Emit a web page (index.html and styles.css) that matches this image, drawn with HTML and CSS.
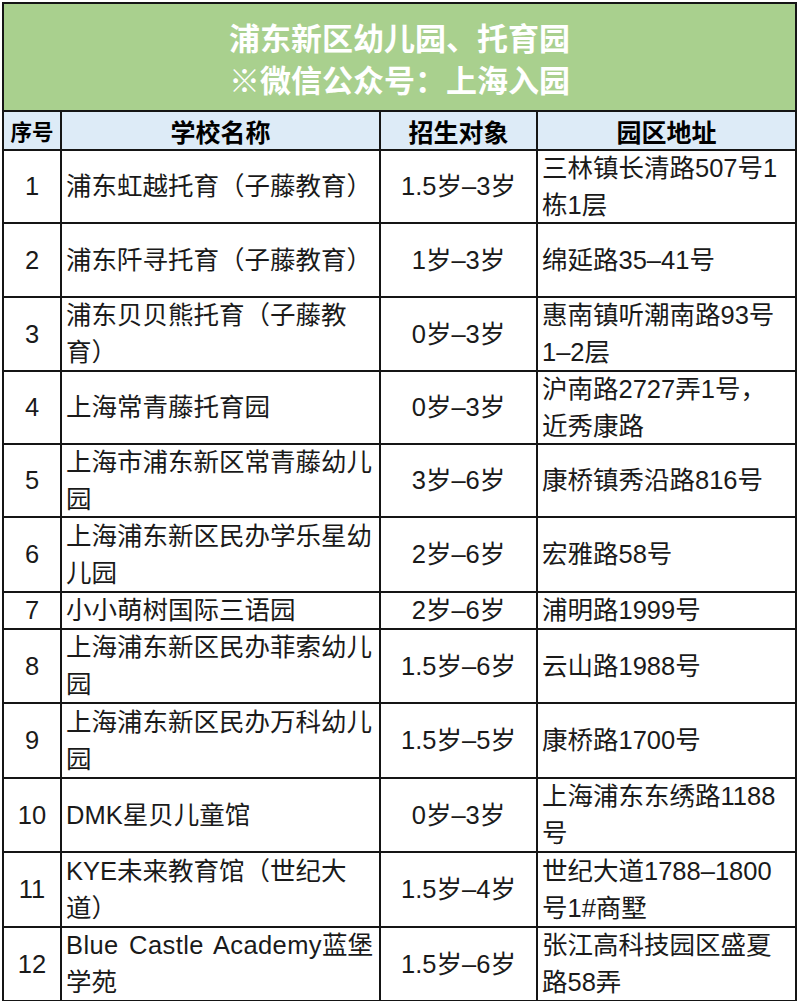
FILE: index.html
```html
<!DOCTYPE html>
<html lang="zh-CN">
<head>
<meta charset="utf-8">
<title>浦东新区幼儿园、托育园</title>
<link rel="stylesheet" href="styles.css">
</head>
<body>
<div class="sheet">
  <div class="title">浦东新区幼儿园、托育园<br>※微信公众号：上海入园</div>

  <div class="hd hd-num">序号</div>
  <div class="hd">学校名称</div>
  <div class="hd">招生对象</div>
  <div class="hd">园区地址</div>

  <div class="cell num">1</div>
  <div class="cell left">浦东虹越托育（子藤教育）</div>
  <div class="cell mid">1.5岁–3岁</div>
  <div class="cell left">三林镇长清路507号1<br>栋1层</div>

  <div class="cell num">2</div>
  <div class="cell left">浦东阡寻托育（子藤教育）</div>
  <div class="cell mid">1岁–3岁</div>
  <div class="cell left">绵延路35–41号</div>

  <div class="cell num">3</div>
  <div class="cell left">浦东贝贝熊托育（子藤教<br>育）</div>
  <div class="cell mid">0岁–3岁</div>
  <div class="cell left">惠南镇听潮南路93号<br>1–2层</div>

  <div class="cell num">4</div>
  <div class="cell left">上海常青藤托育园</div>
  <div class="cell mid">0岁–3岁</div>
  <div class="cell left">沪南路2727弄1号，<br>近秀康路</div>

  <div class="cell num">5</div>
  <div class="cell left">上海市浦东新区常青藤幼儿<br>园</div>
  <div class="cell mid">3岁–6岁</div>
  <div class="cell left">康桥镇秀沿路816号</div>

  <div class="cell num">6</div>
  <div class="cell left">上海浦东新区民办学乐星幼<br>儿园</div>
  <div class="cell mid">2岁–6岁</div>
  <div class="cell left">宏雅路58号</div>

  <div class="cell num">7</div>
  <div class="cell left">小小萌树国际三语园</div>
  <div class="cell mid">2岁–6岁</div>
  <div class="cell left">浦明路1999号</div>

  <div class="cell num">8</div>
  <div class="cell left">上海浦东新区民办菲索幼儿<br>园</div>
  <div class="cell mid">1.5岁–6岁</div>
  <div class="cell left">云山路1988号</div>

  <div class="cell num">9</div>
  <div class="cell left">上海浦东新区民办万科幼儿<br>园</div>
  <div class="cell mid">1.5岁–5岁</div>
  <div class="cell left">康桥路1700号</div>

  <div class="cell num">10</div>
  <div class="cell left">DMK星贝儿童馆</div>
  <div class="cell mid">0岁–3岁</div>
  <div class="cell left">上海浦东东绣路1188<br>号</div>

  <div class="cell num">11</div>
  <div class="cell left">KYE未来教育馆（世纪大<br>道）</div>
  <div class="cell mid">1.5岁–4岁</div>
  <div class="cell left">世纪大道1788–1800<br>号1#商墅</div>

  <div class="cell num">12</div>
  <div class="cell left"><div><span class="latin">Blue Castle Academy</span>蓝堡<br>学苑</div></div>
  <div class="cell mid">1.5岁–6岁</div>
  <div class="cell left">张江高科技园区盛夏<br>路58弄</div>
</div>
</body>
</html>
```

FILE: styles.css
```css
html, body {
  margin: 0;
  padding: 0;
  background: #ffffff;
}

body {
  font-family: "Liberation Sans", "Noto Sans CJK SC", sans-serif;
  color: #1a1a1a;
}

.sheet {
  display: grid;
  grid-template-columns: 56px 317px 155px 257px;
  grid-template-rows: 106px 37px 71px 72px 72px 71px 71px 73px 35px 72px 73px 72px 73px 72px;
  gap: 2px;
  padding: 2px;
  background: #151515;
  width: max-content;
  margin: 2px 0 0 2px;
}

.title {
  grid-column: 1 / -1;
  background: #a9d08e;
  color: #ffffff;
  font-family: "Noto Sans CJK SC", sans-serif;
  font-weight: 600;
  font-size: 31px;
  line-height: 42px;
  display: flex;
  align-items: center;
  justify-content: center;
  text-align: center;
  padding-top: 1px;
}

.hd {
  background: #ddebf7;
  color: #000000;
  font-family: "Noto Sans CJK SC", sans-serif;
  font-weight: 700;
  font-size: 25px;
  display: flex;
  align-items: center;
  justify-content: center;
  white-space: nowrap;
}

.hd-num {
  font-size: 21.5px;
}

.cell {
  background: #ffffff;
  font-size: 25.5px;
  line-height: 37px;
  display: flex;
  align-items: center;
  white-space: nowrap;
  overflow: hidden;
}

.num {
  justify-content: center;
}

.mid {
  justify-content: center;
}

.left {
  padding-left: 4px;
}

.latin {
  word-spacing: 3px;
  letter-spacing: 0.4px;
}
```
